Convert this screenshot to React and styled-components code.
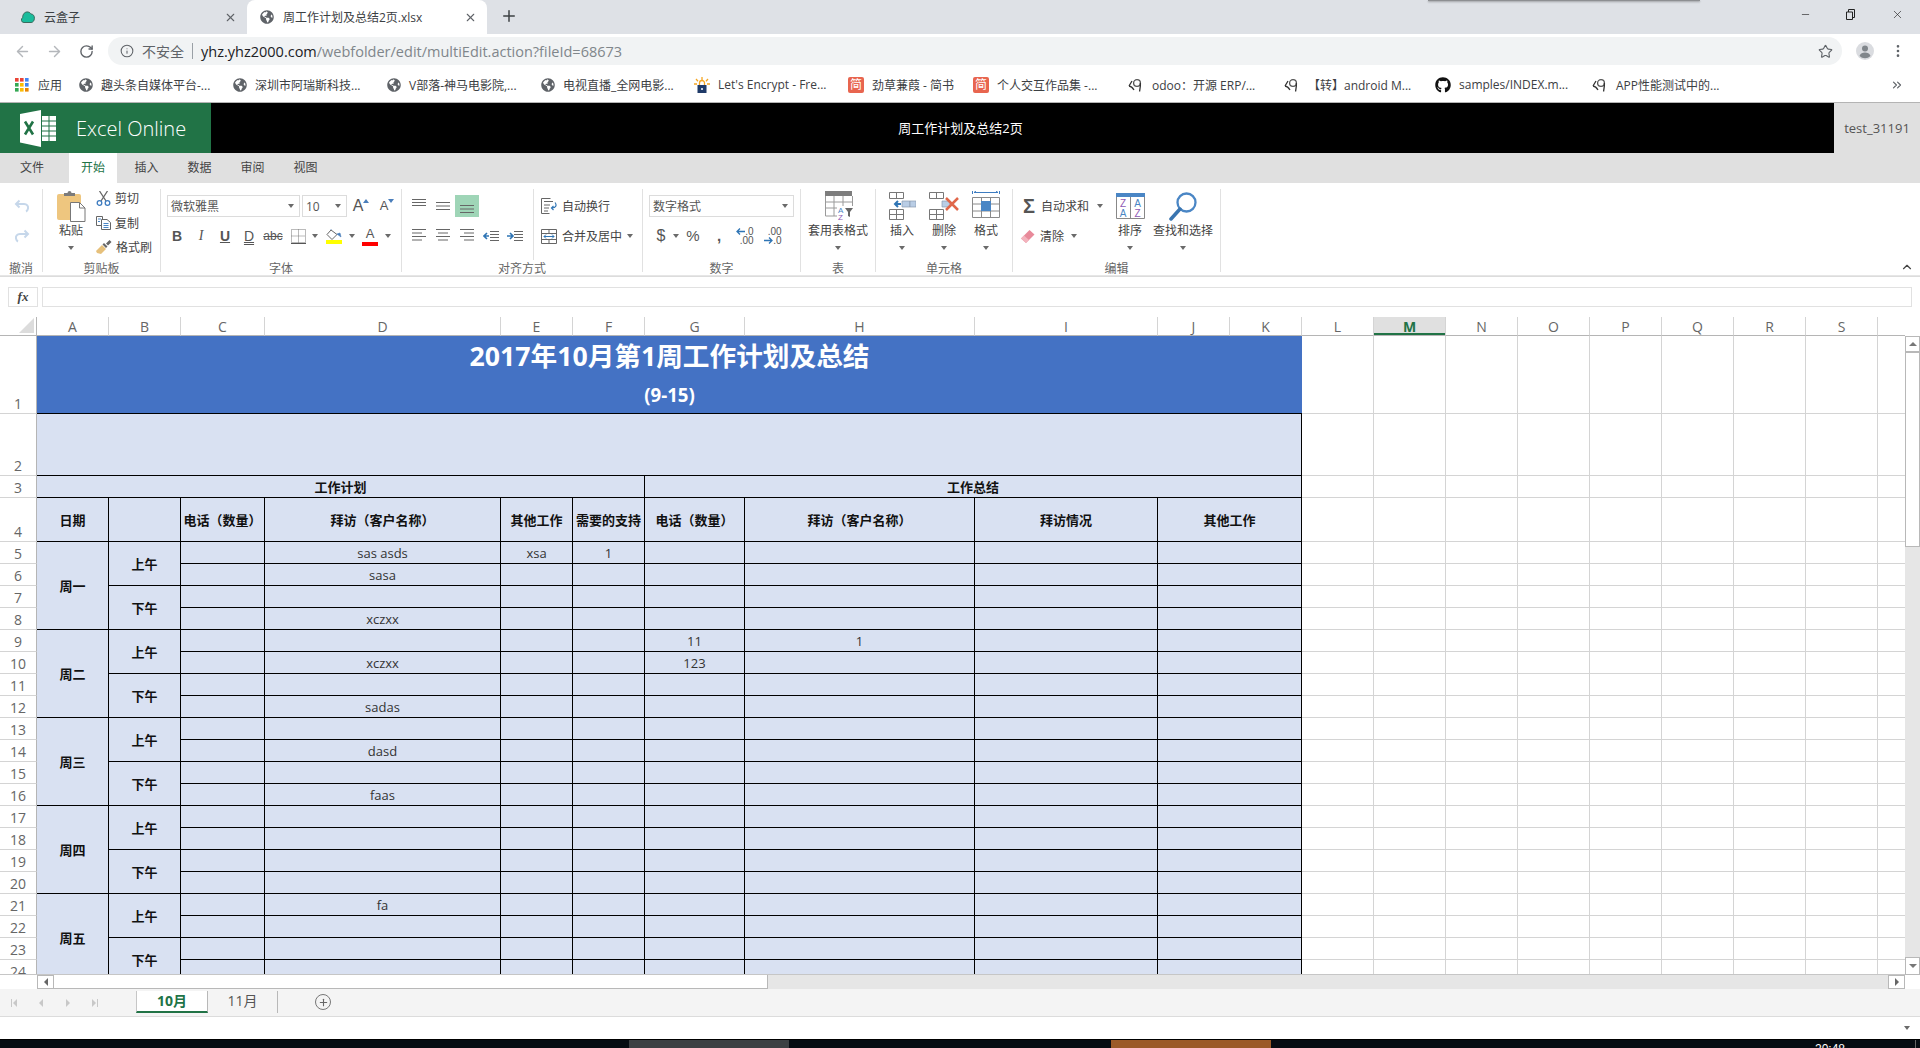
import React from 'react';
import styled, { createGlobalStyle } from 'styled-components';
import { ArrowLeft, ArrowRight, RotateCw, Info, Star, X, Plus, Minus, EllipsisVertical, ChevronsRight, ChevronUp } from 'lucide-react';
import { FaGithub, FaGlobeAmericas } from 'react-icons/fa';

const SANS = `"Open Sans", "Noto Sans CJK SC", sans-serif`;
const GREEN = '#217346';
const SHEET_BLUE = '#d9e1f2';
const GRID_LINE = '#d4d4d4';

const GlobalStyle = createGlobalStyle`
  html, body { margin: 0; padding: 0; background: #fff; }
  * { box-sizing: border-box; }
  body { font-family: ${SANS}; overflow: hidden; }
`;

const Page = styled.div`
  position: relative;
  width: 1920px;
  height: 1048px;
  display: flex;
  flex-direction: column;
  overflow: hidden;
`;

const Ico = styled.svg`
  display: block;
  flex: none;
`;

/* ---------- browser chrome ---------- */

const TabStrip = styled.div`
  height: 34px;
  display: flex;
  align-items: flex-end;
  background: #dee1e6;
  flex: none;
`;

const BrowserTab = styled.div`
  width: ${(p) => p.$w}px;
  height: 34px;
  padding: 0 10px 0 ${(p) => p.$pad}px;
  display: flex;
  align-items: center;
  gap: 9px;
  font-size: 12px;
  color: #3c4043;
  background: ${(p) => (p.$active ? '#fff' : 'transparent')};
  border-radius: 8px 8px 0 0;
`;

const TabClose = styled(X)`
  margin-left: auto;
  color: #5f6368;
`;

const NewTab = styled(Plus)`
  margin: 0 0 9px 13px;
  color: #3c4043;
`;

const WindowControls = styled.div`
  margin-left: auto;
  height: 28px;
  align-self: flex-start;
  display: flex;
`;

const WindowButton = styled.div`
  width: 46px;
  display: flex;
  align-items: center;
  justify-content: center;
  color: #222;
`;

const ShadowEdge = styled.div`
  position: absolute;
  left: 1428px;
  top: 0;
  width: 272px;
  height: 1px;
  background: #8d8f92;
  box-shadow: 0 1px 2px rgba(0, 0, 0, 0.4);
`;

const AddressRow = styled.div`
  height: 34px;
  display: flex;
  align-items: center;
  padding-left: 6px;
  background: #fff;
  flex: none;
`;

const NavButton = styled.div`
  width: 32px;
  display: flex;
  justify-content: center;
  color: ${(p) => (p.$off ? '#b4b7bb' : '#5f6368')};
`;

const Omnibox = styled.div`
  width: 1734px;
  margin-left: 6px;
  height: 28px;
  border-radius: 14px;
  background: #f1f3f4;
  display: flex;
  align-items: center;
  padding: 0 9px 0 12px;
  font-size: 14px;
  color: #80868b;
`;

const Insecure = styled.span`
  margin-left: 8px;
  color: #5f6368;
`;

const OmniDivider = styled.span`
  width: 1px;
  height: 16px;
  margin: 0 8px 0 8px;
  background: #9aa0a6;
`;

const UrlText = styled.span`
  font-size: 14.5px;
`;

const Domain = styled.span`
  color: #202124;
`;

const OmniStar = styled(Star)`
  margin-left: auto;
  color: #5f6368;
`;

const ProfileSlot = styled.div`
  width: 46px;
  display: flex;
  justify-content: center;
`;

const BookmarkRow = styled.div`
  height: 35px;
  display: flex;
  align-items: center;
  padding: 0 0 1px 15px;
  background: #fff;
  border-bottom: 1px solid #b4b4b4;
  font-size: 12px;
  color: #3c4043;
  flex: none;
`;

const Bookmark = styled.div`
  width: ${(p) => p.$w}px;
  display: flex;
  align-items: center;
  gap: ${(p) => p.$gap || 8}px;
  white-space: nowrap;
  flex: none;
`;

const JianBadge = styled.span`
  width: 16px;
  height: 16px;
  border-radius: 2px;
  background: #e8654f;
  color: #fff;
  font-size: 12px;
  line-height: 16px;
  text-align: center;
  flex: none;
`;

const MoreBookmarks = styled(ChevronsRight)`
  margin-left: auto;
  margin-right: 16px;
  color: #5f6368;
`;

const AppsIcon = () => {
  const colors = ['#ea4335', '#ea4335', '#4285f4', '#34a853', '#fbbc05', '#4285f4', '#34a853', '#fbbc05', '#ea8600'];
  return (
    <Ico width="14" height="14" viewBox="0 0 14 14">
      {colors.map((c, i) => (
        <rect key={i} x={(i % 3) * 5} y={Math.floor(i / 3) * 5} width="3.6" height="3.6" fill={c} />
      ))}
    </Ico>
  );
};

const CloudFavicon = () => (
  <Ico width="14" height="14" viewBox="0 0 14 14">
    <path d="M3 12.5a2.6 2.6 0 0 1-1.4-4.8C1.6 4 4 1.5 7 2c1.6.2 2.4 1.2 3 2 2 0 3.5 1.7 3.4 4.2 0 2.5-1.5 4.3-3.4 4.3z" fill="#1abc9c" stroke="#3a6b5e" strokeWidth="1" />
  </Ico>
);

const LetsEncryptIcon = () => (
  <Ico width="16" height="16" viewBox="0 0 16 16">
    <path d="M8 0v3M2 2l2 2.2M14 2l-2 2.2M0 7h3M16 7h-3" stroke="#f5a623" strokeWidth="1.3" />
    <path d="M5.5 8V6a2.5 2.5 0 0 1 5 0v2" fill="none" stroke="#f5a623" strokeWidth="1.3" />
    <rect x="3.5" y="8" width="9" height="8" fill="#1f3a68" />
    <circle cx="8" cy="12" r="1" fill="#fff" />
  </Ico>
);

const OdooIcon = () => (
  <Ico width="16" height="16" viewBox="0 0 16 16">
    <circle cx="9" cy="6" r="3.4" fill="none" stroke="#555" strokeWidth="1.3" />
    <path d="M12.4 6c.2 3.5-.6 6-.8 8.500M1 9c2 .2 3.500 1.500 5 4M1 9l3-5" fill="none" stroke="#333" strokeWidth="1.3" />
  </Ico>
);

const Globe = () => <FaGlobeAmericas size={14} color="#5f6368" style={{ flex: 'none' }} />;

const BOOKMARKS = [
  { w: 154, icon: 'globe', text: '趣头条自媒体平台-...' },
  { w: 154, icon: 'globe', text: '深圳市阿瑞斯科技...' },
  { w: 154, icon: 'globe', text: 'V部落-神马电影院,...' },
  { w: 153, icon: 'globe', text: '电视直播_全网电影...' },
  { w: 154, icon: 'le', text: "Let's Encrypt - Fre..." },
  { w: 125, icon: 'jian', text: '劲草蒹葭 - 简书' },
  { w: 155, icon: 'jian', text: '个人交互作品集 -...' },
  { w: 156, icon: 'odoo', text: 'odoo：开源 ERP/...' },
  { w: 151, icon: 'odoo', text: '【转】android M...' },
  { w: 157, icon: 'github', text: 'samples/INDEX.m...' },
  { w: 140, icon: 'odoo', text: 'APP性能测试中的...' }
];

const bookmarkIcon = (icon) => {
  if (icon === 'globe') return <Globe />;
  if (icon === 'le') return <LetsEncryptIcon />;
  if (icon === 'jian') return <JianBadge>简</JianBadge>;
  if (icon === 'github') return <FaGithub size={16} color="#111" style={{ flex: 'none' }} />;
  return <OdooIcon />;
};

/* ---------- excel header ---------- */

const AppBar = styled.div`
  height: 50px;
  display: flex;
  background: #000;
  flex: none;
`;

const Brand = styled.div`
  width: 211px;
  background: ${GREEN};
  display: flex;
  align-items: center;
  gap: 20px;
  padding-left: 20px;
  color: #fff;
  font-size: 20px;
  font-weight: 300;
`;

const DocTitle = styled.div`
  flex: 1;
  padding-right: 124px;
  text-align: center;
  line-height: 50px;
  color: #fff;
  font-size: 13px;
`;

const UserBox = styled.div`
  width: 86px;
  background: #e0e0e0;
  color: #555;
  font-size: 13px;
  line-height: 50px;
  text-align: center;
`;

const ExcelLogo = () => (
  <Ico width="36" height="37" viewBox="0 0 36 37">
    <path d="M0 4 21 0v37L0 32.5z" fill="#fff" />
    <path d="M5 11.5 13 24.5M13 11.5 5 24.5" stroke={GREEN} strokeWidth="2.6" />
    <path d="M22 6h14v25H22z" fill="#fff" />
    <path d="M29 6v25M22 11h14M22 16h14M22 21h14M22 26h14" stroke={GREEN} strokeWidth="1" />
  </Ico>
);

const RibbonTabs = styled.div`
  height: 30px;
  display: flex;
  background: #e0e0e0;
  flex: none;
`;

const RibbonTab = styled.div`
  width: ${(p) => p.$w || 53}px;
  margin-right: ${(p) => p.$mr || 0}px;
  text-align: center;
  line-height: 30px;
  font-size: 12px;
  color: ${(p) => (p.$active ? GREEN : '#444')};
  background: ${(p) => (p.$active ? '#fff' : 'transparent')};
`;

/* ---------- ribbon ---------- */

const Ribbon = styled.div`
  height: 94px;
  display: flex;
  align-items: flex-start;
  padding-top: 6px;
  background: #fff;
  border-bottom: 1px solid #dcdcdc;
  box-shadow: inset 0 -1px 0 #e6e6e6;
  color: #444;
  font-size: 12px;
  flex: none;
`;

const Group = styled.div`
  width: ${(p) => p.$w}px;
  height: 83px;
  display: flex;
  flex-direction: column;
  border-right: 1px solid #e1e1e1;
  flex: none;
`;

const GroupBody = styled.div`
  flex: 1;
  min-height: 0;
  display: flex;
  padding-left: ${(p) => p.$pad || 0}px;
`;

const GroupLabel = styled.div`
  height: 16px;
  padding-top: 1px;
  margin-bottom: -4px;
  line-height: 16px;
  text-align: center;
  color: #666;
`;

const Stack = styled.div`
  width: ${(p) => (p.$w ? `${p.$w}px` : 'auto')};
  padding-top: 6px;
  display: flex;
  flex-direction: column;
  gap: 8px;
  flex: none;
`;

const ToolRow = styled.div`
  height: 22px;
  display: flex;
  align-items: center;
  gap: ${(p) => p.$gap || 0}px;
`;

const ToolText = styled.span`
  white-space: nowrap;
`;

const ToolButton = styled.div`
  width: ${(p) => p.$w || 24}px;
  height: 22px;
  display: flex;
  align-items: center;
  justify-content: center;
  background: ${(p) => (p.$active ? '#9fd5b7' : 'transparent')};
  flex: none;
`;

const Caret = styled.span`
  display: block;
  width: 0;
  height: 0;
  margin: ${(p) => p.$margin || '0'};
  border-left: 3.5px solid transparent;
  border-right: 3.5px solid transparent;
  border-top: 4px solid #6a6a6a;
  flex: none;
`;

const LargeButton = styled.div`
  width: ${(p) => p.$w}px;
  display: flex;
  flex-direction: column;
  align-items: center;
  white-space: nowrap;
  flex: none;
`;

const LargeIcon = styled.div`
  height: 34px;
  display: flex;
  align-items: center;
  justify-content: center;
`;

const LargeText = styled.div`
  height: 16px;
  line-height: 16px;
`;

const LargeCaret = styled.div`
  height: 18px;
  display: flex;
  align-items: center;
`;

const ClipRows = styled.div`
  display: flex;
  flex-direction: column;
  margin: -3px 0 0 10px;
`;

const ClipRow = styled.div`
  height: 24.5px;
  display: flex;
  align-items: center;
  gap: 4px;
`;

const SelectBox = styled.div`
  width: ${(p) => p.$w}px;
  height: 22px;
  border: 1px solid #dcdcdc;
  margin-right: ${(p) => p.$mr || 0}px;
  padding: 0 5px 0 3px;
  display: flex;
  align-items: center;
  justify-content: space-between;
  color: #555;
  flex: none;
`;

const FormatGlyph = styled.span`
  font-family: ${(p) => (p.$serif ? '"Liberation Serif", serif' : '"Liberation Sans", sans-serif')};
  font-size: ${(p) => p.$size || 14}px;
  font-weight: ${(p) => (p.$bold ? 700 : 400)};
  font-style: ${(p) => (p.$italic ? 'italic' : 'normal')};
  text-decoration: ${(p) => p.$deco || 'none'};
  color: #555;
  line-height: 16px;
`;

const GrowGlyph = styled.div`
  display: flex;
  align-items: flex-start;
  color: #555;
  font-family: "Liberation Sans", sans-serif;
  font-size: ${(p) => p.$size}px;
  line-height: 18px;
`;

const TinyTriangle = styled.span`
  width: 0;
  height: 0;
  margin-top: 2px;
  border-left: 3px solid transparent;
  border-right: 3px solid transparent;
  ${(p) => (p.$down ? 'border-top: 4px solid #4a7ebb;' : 'border-bottom: 4px solid #4a7ebb;')}
`;

const ColorSwatch = styled.div`
  display: flex;
  flex-direction: column;
  align-items: center;
  width: 16px;
`;

const SwatchBar = styled.span`
  width: 16px;
  height: 4px;
  background: ${(p) => p.$color};
`;

const DecimalGlyph = styled.div`
  display: flex;
  flex-direction: column;
  align-items: flex-end;
  font-family: "Liberation Sans", sans-serif;
  font-size: 10px;
  line-height: 9px;
  color: #555;
`;

const DecimalLine = styled.div`
  display: flex;
  align-items: center;
`;

const SumGlyph = styled.span`
  width: 16px;
  font-family: "Liberation Sans", sans-serif;
  font-size: 20px;
  font-weight: 700;
  line-height: 20px;
  color: #555;
  text-align: center;
`;

const CollapseRibbon = styled(ChevronUp)`
  align-self: flex-end;
  margin: 0 6px 2px auto;
  color: #444;
`;

const AlignSplit = styled.div`
  width: 132px;
  height: 100%;
  padding-left: 5px;
  border-right: 1px solid #e1e1e1;
  margin-bottom: -16px;
`;

const UndoIcon = ({ flip }) => (
  <Ico width="16" height="14" viewBox="0 0 16 14" style={flip ? { transform: 'scaleX(-1)' } : undefined}>
    <path d="M5.5 1.5 2 5l3.5 3.5M2.5 5H10c3 0 4.5 2 4 4.5-.3 1.5-1 2.5-2 3" fill="none" stroke="#c6d7ea" strokeWidth="2" />
  </Ico>
);

const PasteIcon = () => (
  <Ico width="29" height="32" viewBox="0 0 29 32">
    <rect x="0" y="4" width="24" height="26" rx="2" fill="#eec67f" />
    <path d="M7 5V3h3.5a2 2 0 0 1 4 0H18v3H7z" fill="#7b7b7b" />
    <path d="M13.5 12.5h9l5.5 5.5v13.5H13.5z" fill="#fff" stroke="#777" />
    <path d="M22.5 12.5V18H28" fill="none" stroke="#777" />
  </Ico>
);

const CutIcon = () => (
  <Ico width="15" height="15" viewBox="0 0 15 15">
    <path d="M3.5 0 10 10M11.5 0 5 10" stroke="#666" strokeWidth="1.3" />
    <circle cx="3.5" cy="12" r="2.3" fill="none" stroke="#3e7cc0" strokeWidth="1.3" />
    <circle cx="11.5" cy="12" r="2.3" fill="none" stroke="#3e7cc0" strokeWidth="1.3" />
  </Ico>
);

const CopyIcon = () => (
  <Ico width="15" height="14" viewBox="0 0 15 14">
    <path d="M.5.5h6v9h-6z" fill="#fff" stroke="#666" />
    <path d="M5.5 3.5H11l3.5 3v7h-9z" fill="#fff" stroke="#666" />
    <path d="M2 3h3M2 5.5h2M7.5 7.5h5M7.5 9.5h5M7.5 11.5h5" stroke="#4a86c5" />
  </Ico>
);

const PainterIcon = () => (
  <Ico width="16" height="14" viewBox="0 0 16 14">
    <path d="M0 11 6 5l4 4-5 5-4-1z" fill="#e6c07b" />
    <path d="M6.5 4.5 8 3l3.5 3.5L10 8zM10 3.5 13.5 0 15.5 2 12 5.5z" fill="#666" />
  </Ico>
);

const BorderIcon = () => (
  <Ico width="15" height="15" viewBox="0 0 15 15">
    <path d="M.5.5h14v13h-14zM7.5.5v13M.5 7h14" fill="none" stroke="#777" strokeDasharray="1 1" />
    <path d="M0 14.5h15" stroke="#555" />
  </Ico>
);

const BucketIcon = () => (
  <Ico width="16" height="11" viewBox="0 0 16 11">
    <path d="M5 1 1 5.5 6 10.5l5-5z" fill="#fff" stroke="#666" />
    <path d="M5 1V0M11 5l3-1 1 4z" fill="#4a7ebb" stroke="#4a7ebb" strokeWidth=".6" />
  </Ico>
);

const AlignIcon = ({ kind }) => {
  const rows = {
    top: [[0, 14, 1.5], [0, 14, 4.5], [0, 14, 7.5]],
    middle: [[0, 14, 4.5], [0, 14, 8], [0, 14, 11.5]],
    bottom: [[0, 14, 7.5], [0, 14, 11], [0, 14, 14.5]],
    left: [[0, 14, 1.5], [0, 10, 5], [0, 14, 8.5], [0, 10, 12]],
    center: [[0, 14, 1.5], [2, 10, 5], [0, 14, 8.5], [2, 10, 12]],
    right: [[0, 14, 1.5], [4, 10, 5], [0, 14, 8.5], [4, 10, 12]]
  }[kind];

  return (
    <Ico width="14" height="16" viewBox="0 0 14 16">
      {rows.map(([x, w, y]) => (
        <path key={y} d={`M${x} ${y}h${w}`} stroke="#666" />
      ))}
    </Ico>
  );
};

const IndentIcon = ({ out }) => (
  <Ico width="16" height="12" viewBox="0 0 16 12">
    <path d="M7 1.5h9M7 4.5h9M7 7.5h9M7 10.5h9" stroke="#666" />
    <path d={out ? 'M6 6H1M4 3 1 6l3 3' : 'M0 6h5M3 3l3 3-3 3'} fill="none" stroke="#2f75b5" strokeWidth="1.6" />
  </Ico>
);

const WrapIcon = () => (
  <Ico width="16" height="16" viewBox="0 0 16 16">
    <path d="M.5.5h9M.5.5v15h8" fill="none" stroke="#666" />
    <path d="M3 3.5h9M3 7h6M3 10h5M3 13h4" stroke="#666" />
    <path d="M14 4.500c2 2.500 1 5.500-3 5.500M12.500 8 10.500 10l2 2" fill="none" stroke="#2f75b5" strokeWidth="1.2" />
  </Ico>
);

const MergeIcon = () => (
  <Ico width="16" height="15" viewBox="0 0 16 15">
    <path d="M.5.5h15v14H.5zM.5 4.5h15M.5 10.5h15M8 .5v4M8 10.5v4" fill="none" stroke="#666" />
    <path d="M3 7.5h10M5 5.5l-2 2 2 2M11 5.5l2 2-2 2" fill="none" stroke="#2f75b5" />
  </Ico>
);

const TableFormatIcon = () => (
  <Ico width="29" height="30" viewBox="0 0 29 30">
    <rect x="1" y="0" width="27" height="5" fill="#7d7d7d" />
    <path d="M1.5 5v20h27V5M1.5 11h27M1.5 17h27M10 5v20M19 5v20" fill="none" stroke="#9a9a9a" />
    <rect x="13" y="15" width="16" height="15" fill="#fff" />
    <text x="14" y="21.5" fontFamily="Liberation Sans, sans-serif" fontSize="8" fill="#4a86c5">A</text>
    <text x="14" y="29" fontFamily="Liberation Sans, sans-serif" fontSize="8" fill="#8e5ab5">Z</text>
    <path d="M21 17h8l-3 4v5l-2-1v-4z" fill="#666" />
  </Ico>
);

const CellsIcon = ({ kind }) => {
  const width = kind === 'insert' ? 27 : 30;

  return (
    <Ico width={width} height="28" viewBox={`0 0 ${width} 28`}>
      <path d="M.5.5h14v6H.5zM7.5.5v6M.5 17.5h14v10H.5zM7.5 17.5v10M.5 22.5h14" fill="none" stroke="#777" />
      {kind === 'insert' && <path d="M12 12H6M9 9l-3 3 3 3" fill="none" stroke="#2f75b5" strokeWidth="2" />}
      <path d="M13 9h8v6h-8z" fill="#b9cde5" stroke="#8a9bb0" strokeWidth=".7" />
      {kind === 'insert' && <path d="M21 9h6v6h-6z" fill="#b9cde5" stroke="#8a9bb0" strokeWidth=".7" />}
      {kind === 'delete' && <path d="M17 6l12 12M29 6 17 18" stroke="#e0674a" strokeWidth="2.5" />}
    </Ico>
  );
};

const FormatCellsIcon = () => (
  <Ico width="28" height="30" viewBox="0 0 28 30">
    <path d="M2 1.5h24M.5 0v3M27.5 0v3" stroke="#3e7cc0" />
    <path d="M6 1.5H2l2-1.5M22 1.5h4L24 0" fill="none" stroke="#3e7cc0" />
    <path d="M.5 6.5h27v20H.5zM9.5 6.5v20M18.5 6.5v20M.5 13h27M.5 20h27" fill="none" stroke="#8a8a8a" />
    <rect x="9" y="10" width="10" height="10" fill="#4a86c5" />
  </Ico>
);

const EraserIcon = () => (
  <Ico width="14" height="14" viewBox="0 0 14 14">
    <path d="M0 9.5 8.5 1l5 4.5L5 14z" fill="#e88a9a" />
    <path d="M0 9.5 3 6.5l5 4.5L5 14z" fill="#f3b3bd" />
  </Ico>
);

const SortIcon = () => (
  <Ico width="29" height="26" viewBox="0 0 29 26">
    <rect width="29" height="4" fill="#4a86c5" />
    <path d="M.5 4v21.5h28V4M14.5 4v21.5" fill="none" stroke="#888" />
    <g fontFamily="Liberation Sans, sans-serif" fontSize="10" textAnchor="middle">
      <text x="7" y="14" fill="#8e5ab5">Z</text>
      <text x="7" y="24" fill="#4a86c5">A</text>
      <text x="21.5" y="14" fill="#4a86c5">A</text>
      <text x="21.5" y="24" fill="#8e5ab5">Z</text>
    </g>
  </Ico>
);

const FindIcon = () => (
  <Ico width="28" height="29" viewBox="0 0 28 29">
    <circle cx="17.5" cy="10.5" r="9" fill="none" stroke="#4a86c5" strokeWidth="2.3" />
    <path d="M11 17 2 27" stroke="#3a75b0" strokeWidth="3.5" strokeLinecap="round" />
  </Ico>
);

/* ---------- formula bar ---------- */

const FormulaBar = styled.div`
  height: 40px;
  padding: 10px 8px;
  display: flex;
  gap: 4px;
  background: #fff;
  flex: none;
`;

const FxBox = styled.div`
  width: 30px;
  border: 1px solid #e1e1e1;
  font-family: "Liberation Serif", serif;
  font-size: 13px;
  font-style: italic;
  font-weight: 700;
  line-height: 17px;
  text-align: center;
  color: #444;
`;

const FormulaInput = styled.div`
  flex: 1;
  border: 1px solid #e1e1e1;
`;

/* ---------- sheet ---------- */

const GridArea = styled.div`
  height: 658px;
  display: flex;
  flex: none;
`;

const Viewport = styled.div`
  flex: 1;
  min-width: 0;
  overflow: hidden;
  border-bottom: 1px solid #c6c6c6;
`;

const SheetTable = styled.table`
  width: 1949px;
  table-layout: fixed;
  border-collapse: separate;
  border-spacing: 0;
  font-size: 13px;
  line-height: 16px;
  color: #333;
`;

const SheetCol = styled.col`
  width: ${(p) => p.$w}px;
`;

const SheetRow = styled.tr`
  height: ${(p) => p.$h}px;
`;

const ColHead = styled.th`
  padding: 0;
  font-size: 14px;
  line-height: 17px;
  font-weight: ${(p) => (p.$active ? 700 : 400)};
  color: ${(p) => (p.$active ? GREEN : '#666')};
  background: ${(p) => (p.$active ? '#e0e0e0' : '#fff')};
  border-right: 1px solid ${GRID_LINE};
  border-bottom: 1px solid #b5b5b5;
  box-shadow: ${(p) => (p.$active ? `inset 0 -2px 0 ${GREEN}` : 'none')};
`;

const CornerCell = styled.th`
  padding: 0;
  vertical-align: top;
  border-bottom: 1px solid #b5b5b5;
  border-right: 1px solid #b5b5b5;
`;

const CornerMark = styled.div`
  width: 0;
  height: 0;
  margin: 1px 2px 0 auto;
  border-left: 15px solid transparent;
  border-bottom: 15px solid #dcdcdc;
`;

const RowHead = styled.th`
  padding: 0;
  font-size: 14px;
  font-weight: 400;
  line-height: 18px;
  vertical-align: bottom;
  color: #666;
  background: #fff;
  border-right: 1px solid #b5b5b5;
  border-bottom: 1px solid ${GRID_LINE};
`;

const BlankCell = styled.td`
  padding: 0;
  border-right: 1px solid ${GRID_LINE};
  border-bottom: 1px solid ${GRID_LINE};
`;

const DataCell = styled.td`
  padding: 0;
  text-align: center;
  vertical-align: middle;
  overflow: hidden;
  white-space: nowrap;
  background: ${SHEET_BLUE};
  font-weight: ${(p) => (p.$bold ? 700 : 400)};
  color: ${(p) => (p.$bold ? '#111' : '#333')};
  border-right: 1px solid #000;
  border-bottom: 1px solid #000;
`;

const TitleCell = styled.td`
  padding: 0;
  text-align: center;
  background: #4472c4;
  color: #fff;
  font-weight: 700;
  border-bottom: 1px solid #000;
`;

const TitleLine = styled.div`
  font-size: 26.67px;
  line-height: 40px;
`;

const SubtitleLine = styled.div`
  font-size: 18.67px;
  line-height: 37px;
`;

const VScroll = styled.div`
  width: 15px;
  padding-top: 19px;
  display: flex;
  flex-direction: column;
  background: #e6e6e6;
  background-clip: content-box;
`;

const ScrollButton = styled.div`
  width: ${(p) => p.$w || 15}px;
  height: ${(p) => p.$h || 15}px;
  display: flex;
  align-items: center;
  justify-content: center;
  background: #fff;
  border: 1px solid #b8b8b8;
  flex: none;
`;

const Arrow = styled.span`
  width: 0;
  height: 0;
  ${(p) => p.$dir === 'up' && 'border-left: 4px solid transparent; border-right: 4px solid transparent; border-bottom: 4px solid #777;'}
  ${(p) => p.$dir === 'down' && 'border-left: 4px solid transparent; border-right: 4px solid transparent; border-top: 4px solid #777;'}
  ${(p) => p.$dir === 'left' && 'border-top: 4px solid transparent; border-bottom: 4px solid transparent; border-right: 4px solid #666;'}
  ${(p) => p.$dir === 'right' && 'border-top: 4px solid transparent; border-bottom: 4px solid transparent; border-left: 4px solid #666;'}
`;

const VThumb = styled.div`
  height: 195px;
  background: #fff;
  border: 1px solid #b8b8b8;
  flex: none;
`;

const VTrack = styled.div`
  flex: 1;
`;

const HScroll = styled.div`
  height: 14px;
  display: flex;
  padding-left: 37px;
  background: #fff;
  flex: none;
`;

const HThumb = styled.div`
  width: 714px;
  background: #fff;
  border-bottom: 1px solid #b8b8b8;
  border-right: 1px solid #b8b8b8;
  flex: none;
`;

const HTrack = styled.div`
  flex: 1;
  background: #e6e6e6;
`;

const HCorner = styled.div`
  width: 15px;
  flex: none;
`;

const SheetBar = styled.div`
  height: 28px;
  display: flex;
  align-items: flex-start;
  background: #f4f4f4;
  border-bottom: 1px solid #dcdcdc;
  flex: none;
`;

const SheetNav = styled.div`
  width: 27px;
  height: 27px;
  display: flex;
  align-items: center;
  justify-content: center;
  gap: 1px;
  flex: none;
`;

const NavBar = styled.span`
  width: 1px;
  height: 8px;
  background: #c8c8c8;
`;

const NavArrow = styled.span`
  width: 0;
  height: 0;
  border-top: 4px solid transparent;
  border-bottom: 4px solid transparent;
  ${(p) => (p.$left ? 'border-right: 4px solid #c8c8c8;' : 'border-left: 4px solid #c8c8c8;')}
`;

const SheetTab = styled.div`
  width: ${(p) => p.$w}px;
  height: 22px;
  margin: 2px 0 0 ${(p) => p.$ml || 0}px;
  text-align: center;
  font-size: 14px;
  line-height: 19px;
  font-weight: ${(p) => (p.$active ? 700 : 400)};
  color: ${(p) => (p.$active ? GREEN : '#555')};
  background: ${(p) => (p.$active ? '#fff' : 'transparent')};
  border-bottom: ${(p) => (p.$active ? `2px solid ${GREEN}` : 'none')};
  border-left: ${(p) => (p.$active ? '1px solid #c6c6c6' : 'none')};
  border-right: 1px solid #b8b8b8;
`;

const AddSheet = styled.div`
  width: 16px;
  height: 16px;
  margin: 5px 0 0 37px;
  border: 1px solid #777;
  border-radius: 50%;
  display: flex;
  align-items: center;
  justify-content: center;
  color: #666;
`;

const StatusBar = styled.div`
  height: 22px;
  display: flex;
  align-items: center;
  justify-content: flex-end;
  padding-right: 10px;
  background: #fff;
  flex: none;
`;

const Taskbar = styled.div`
  height: 9px;
  display: flex;
  background: #060c12;
  border-top: 1px solid #000;
  overflow: hidden;
  flex: none;
`;

const TaskItem = styled.div`
  width: 160px;
  margin-left: ${(p) => p.$ml}px;
  background: ${(p) => p.$color};
  flex: none;
`;

const TaskClock = styled.div`
  margin-left: 544px;
  padding-top: 2px;
  color: #fff;
  font-family: "Liberation Sans", sans-serif;
  font-size: 12px;
  line-height: 14px;
  white-space: nowrap;
`;

const TaskEdge = styled.div`
  width: 1px;
  margin-left: auto;
  margin-right: 4px;
  background: #666;
`;

/* ---------- data ---------- */

const SHEET_COLS = [
  ['A', 72], ['B', 72], ['C', 84], ['D', 236], ['E', 72], ['F', 72], ['G', 100], ['H', 230], ['I', 183], ['J', 72], ['K', 72],
  ['L', 72], ['M', 72], ['N', 72], ['O', 72], ['P', 72], ['Q', 72], ['R', 72], ['S', 72], ['T', 72]
];
const OFF_SHEET = ['L', 'M', 'N', 'O', 'P', 'Q', 'R', 'S', 'T'];
const DATA_COLS = ['C', 'D', 'E', 'F', 'G', 'H', 'I', 'J'];
const DAYS = ['周一', '周二', '周三', '周四', '周五'];

const HEADERS = ['日期', '', '电话（数量）', '拜访（客户名称）', '其他工作', '需要的支持', '电话（数量）', '拜访（客户名称）', '拜访情况', '其他工作'];

const VALUES = {
  5: { D: 'sas asds', E: 'xsa', F: '1' },
  6: { D: 'sasa' },
  8: { D: 'xczxx' },
  9: { G: '11', H: '1' },
  10: { D: 'xczxx', G: '123' },
  12: { D: 'sadas' },
  14: { D: 'dasd' },
  16: { D: 'faas' },
  21: { D: 'fa' }
};

const DATA_ROWS = Array.from({ length: 20 }, (_, i) => i + 5);

const BlankCells = () => OFF_SHEET.map((c) => <BlankCell key={c} />);

const ToolLarge = ({ w, icon, text }) => (
  <LargeButton $w={w}>
    <LargeIcon>{icon}</LargeIcon>
    <LargeText>{text}</LargeText>
    <LargeCaret>
      <Caret />
    </LargeCaret>
  </LargeButton>
);

const renderDataRow = (row) => {
  const k = row - 5;

  return (
    <SheetRow key={row} $h={22}>
      <RowHead>{row}</RowHead>
      {k % 4 === 0 && (
        <DataCell rowSpan={4} $bold>
          {DAYS[k / 4]}
        </DataCell>
      )}
      {k % 2 === 0 && (
        <DataCell rowSpan={2} $bold>
          {k % 4 === 0 ? '上午' : '下午'}
        </DataCell>
      )}
      {DATA_COLS.map((c) => (
        <DataCell key={c} colSpan={c === 'J' ? 2 : 1}>
          {(VALUES[row] || {})[c]}
        </DataCell>
      ))}
      <BlankCells />
    </SheetRow>
  );
};

const App = () => (
  <Page>
    <GlobalStyle />

    <TabStrip>
      <BrowserTab $w={247} $pad={21}>
        <CloudFavicon />
        云盒子
        <TabClose size={13} strokeWidth={2} />
      </BrowserTab>
      <BrowserTab $w={240} $pad={13} $active>
        <Globe />
        周工作计划及总结2页.xlsx
        <TabClose size={13} strokeWidth={2} />
      </BrowserTab>
      <NewTab size={18} strokeWidth={2} />
      <WindowControls>
        <WindowButton>
          <Minus size={11} strokeWidth={1.4} />
        </WindowButton>
        <WindowButton>
          <Ico width="10" height="11" viewBox="0 0 10 11">
            <path d="M2.5 3V.5h6v8H7M.5 3h6v7.5h-6z" fill="none" stroke="#222" />
          </Ico>
        </WindowButton>
        <WindowButton>
          <X size={13} strokeWidth={1.2} />
        </WindowButton>
      </WindowControls>
    </TabStrip>
    <ShadowEdge />

    <AddressRow>
      <NavButton $off>
        <ArrowLeft size={17} strokeWidth={2} />
      </NavButton>
      <NavButton $off>
        <ArrowRight size={17} strokeWidth={2} />
      </NavButton>
      <NavButton>
        <RotateCw size={15} strokeWidth={2.2} />
      </NavButton>
      <Omnibox>
        <Info size={14} strokeWidth={1.8} color="#5f6368" />
        <Insecure>不安全</Insecure>
        <OmniDivider />
        <UrlText>
          <Domain>yhz.yhz2000.com</Domain>/webfolder/edit/multiEdit.action?fileId=68673
        </UrlText>
        <OmniStar size={15} strokeWidth={1.8} />
      </Omnibox>
      <ProfileSlot>
        <Ico width="18" height="18" viewBox="0 0 18 18">
          <circle cx="9" cy="9" r="9" fill="#dadce0" />
          <circle cx="9" cy="6.5" r="3" fill="#80868b" />
          <path d="M3.5 14c1-3 3-3.5 5.5-3.5s4.5.5 5.5 3.5a8 8 0 0 1-11 0z" fill="#80868b" />
        </Ico>
      </ProfileSlot>
      <EllipsisVertical size={16} color="#5f6368" style={{ marginLeft: 2 }} />
    </AddressRow>

    <BookmarkRow>
      <Bookmark $w={64} $gap={9}>
        <AppsIcon />
        应用
      </Bookmark>
      {BOOKMARKS.map((b) => (
        <Bookmark key={b.text} $w={b.w}>
          {bookmarkIcon(b.icon)}
          {b.text}
        </Bookmark>
      ))}
      <MoreBookmarks size={14} />
    </BookmarkRow>

    <AppBar>
      <Brand>
        <ExcelLogo />
        Excel Online
      </Brand>
      <DocTitle>周工作计划及总结2页</DocTitle>
      <UserBox>test_31191</UserBox>
    </AppBar>

    <RibbonTabs>
      <RibbonTab $w={64} $mr={5}>文件</RibbonTab>
      <RibbonTab $w={48} $mr={3} $active>开始</RibbonTab>
      <RibbonTab>插入</RibbonTab>
      <RibbonTab>数据</RibbonTab>
      <RibbonTab>审阅</RibbonTab>
      <RibbonTab>视图</RibbonTab>
    </RibbonTabs>

    <Ribbon>
      <Group $w={43}>
        <GroupBody $pad={14}>
          <Stack>
            <ToolRow>
              <UndoIcon />
            </ToolRow>
            <ToolRow>
              <UndoIcon flip />
            </ToolRow>
          </Stack>
        </GroupBody>
        <GroupLabel>撤消</GroupLabel>
      </Group>

      <Group $w={118}>
        <GroupBody $pad={13}>
          <ToolLarge w={30} icon={<PasteIcon />} text="粘贴" />
          <ClipRows>
            <ClipRow>
              <CutIcon />
              <ToolText>剪切</ToolText>
            </ClipRow>
            <ClipRow>
              <CopyIcon />
              <ToolText>复制</ToolText>
            </ClipRow>
            <ClipRow>
              <PainterIcon />
              <ToolText>格式刷</ToolText>
            </ClipRow>
          </ClipRows>
        </GroupBody>
        <GroupLabel>剪贴板</GroupLabel>
      </Group>

      <Group $w={241}>
        <GroupBody $pad={4}>
          <Stack>
            <ToolRow>
              <ToolButton $w={2} />
              <SelectBox $w={133} $mr={2}>
                微软雅黑
                <Caret />
              </SelectBox>
              <SelectBox $w={45}>
                10
                <Caret />
              </SelectBox>
              <ToolButton $w={28}>
                <GrowGlyph $size={16}>
                  A
                  <TinyTriangle />
                </GrowGlyph>
              </ToolButton>
              <ToolButton $w={24}>
                <GrowGlyph $size={13}>
                  A
                  <TinyTriangle $down />
                </GrowGlyph>
              </ToolButton>
            </ToolRow>
            <ToolRow>
              <ToolButton>
                <FormatGlyph $bold>B</FormatGlyph>
              </ToolButton>
              <ToolButton>
                <FormatGlyph $italic $serif>I</FormatGlyph>
              </ToolButton>
              <ToolButton>
                <FormatGlyph $bold $deco="underline">U</FormatGlyph>
              </ToolButton>
              <ToolButton>
                <FormatGlyph $deco="underline double">D</FormatGlyph>
              </ToolButton>
              <ToolButton>
                <FormatGlyph $size={12} $deco="line-through">abc</FormatGlyph>
              </ToolButton>
              <ToolButton $w={26}>
                <BorderIcon />
              </ToolButton>
              <ToolButton $w={8}>
                <Caret />
              </ToolButton>
              <ToolButton $w={30}>
                <ColorSwatch>
                  <BucketIcon />
                  <SwatchBar $color="#ffff00" />
                </ColorSwatch>
              </ToolButton>
              <ToolButton $w={6}>
                <Caret />
              </ToolButton>
              <ToolButton $w={30}>
                <ColorSwatch>
                  <FormatGlyph $size={13}>A</FormatGlyph>
                  <SwatchBar $color="#ff0000" />
                </ColorSwatch>
              </ToolButton>
              <ToolButton $w={6}>
                <Caret />
              </ToolButton>
            </ToolRow>
          </Stack>
        </GroupBody>
        <GroupLabel>字体</GroupLabel>
      </Group>

      <Group $w={241}>
        <GroupBody>
          <AlignSplit>
            <Stack>
              <ToolRow>
                <ToolButton>
                  <AlignIcon kind="top" />
                </ToolButton>
                <ToolButton>
                  <AlignIcon kind="middle" />
                </ToolButton>
                <ToolButton $active>
                  <AlignIcon kind="bottom" />
                </ToolButton>
              </ToolRow>
              <ToolRow>
                <ToolButton>
                  <AlignIcon kind="left" />
                </ToolButton>
                <ToolButton>
                  <AlignIcon kind="center" />
                </ToolButton>
                <ToolButton>
                  <AlignIcon kind="right" />
                </ToolButton>
                <ToolButton>
                  <IndentIcon out />
                </ToolButton>
                <ToolButton>
                  <IndentIcon />
                </ToolButton>
              </ToolRow>
            </Stack>
          </AlignSplit>
          <Stack>
            <ToolRow $gap={5}>
              <ToolButton $w={2} />
              <WrapIcon />
              <ToolText>自动换行</ToolText>
            </ToolRow>
            <ToolRow $gap={5}>
              <ToolButton $w={2} />
              <MergeIcon />
              <ToolText>合并及居中</ToolText>
              <Caret />
            </ToolRow>
          </Stack>
        </GroupBody>
        <GroupLabel>对齐方式</GroupLabel>
      </Group>

      <Group $w={158}>
        <GroupBody $pad={6}>
          <Stack>
            <ToolRow>
              <SelectBox $w={145}>
                数字格式
                <Caret />
              </SelectBox>
            </ToolRow>
            <ToolRow>
              <ToolButton>
                <FormatGlyph $size={16}>$</FormatGlyph>
              </ToolButton>
              <ToolButton $w={6}>
                <Caret />
              </ToolButton>
              <ToolButton $w={28}>
                <FormatGlyph $size={15}>%</FormatGlyph>
              </ToolButton>
              <ToolButton>
                <FormatGlyph $bold $size={15}>,</FormatGlyph>
              </ToolButton>
              <ToolButton $w={28}>
                <DecimalGlyph>
                  <DecimalLine>
                    <Ico width="9" height="7" viewBox="0 0 9 7">
                      <path d="M9 3.5H1M4 .5l-3 3 3 3" fill="none" stroke="#2f75b5" strokeWidth="1.3" />
                    </Ico>
                    .0
                  </DecimalLine>
                  <DecimalLine>.00</DecimalLine>
                </DecimalGlyph>
              </ToolButton>
              <ToolButton $w={28}>
                <DecimalGlyph>
                  <DecimalLine>.00</DecimalLine>
                  <DecimalLine>
                    <Ico width="9" height="7" viewBox="0 0 9 7">
                      <path d="M0 3.5h8M5 .5l3 3-3 3" fill="none" stroke="#2f75b5" strokeWidth="1.3" />
                    </Ico>
                    .0
                  </DecimalLine>
                </DecimalGlyph>
              </ToolButton>
            </ToolRow>
          </Stack>
        </GroupBody>
        <GroupLabel>数字</GroupLabel>
      </Group>

      <Group $w={75}>
        <GroupBody>
          <ToolLarge w={74} icon={<TableFormatIcon />} text="套用表格式" />
        </GroupBody>
        <GroupLabel>表</GroupLabel>
      </Group>

      <Group $w={137}>
        <GroupBody $pad={5}>
          <ToolLarge w={42} icon={<CellsIcon kind="insert" />} text="插入" />
          <ToolLarge w={42} icon={<CellsIcon kind="delete" />} text="删除" />
          <ToolLarge w={42} icon={<FormatCellsIcon />} text="格式" />
        </GroupBody>
        <GroupLabel>单元格</GroupLabel>
      </Group>

      <Group $w={208}>
        <GroupBody $pad={8}>
          <Stack $w={84}>
            <ToolRow $gap={4}>
              <SumGlyph>Σ</SumGlyph>
              <ToolText>自动求和</ToolText>
              <Caret $margin="0 0 0 4px" />
            </ToolRow>
            <ToolRow $gap={5}>
              <EraserIcon />
              <ToolText>清除</ToolText>
              <Caret $margin="0 0 0 2px" />
            </ToolRow>
          </Stack>
          <ToolLarge w={50} icon={<SortIcon />} text="排序" />
          <ToolLarge w={56} icon={<FindIcon />} text="查找和选择" />
        </GroupBody>
        <GroupLabel>编辑</GroupLabel>
      </Group>

      <CollapseRibbon size={14} strokeWidth={2} />
    </Ribbon>

    <FormulaBar>
      <FxBox>fx</FxBox>
      <FormulaInput />
    </FormulaBar>

    <GridArea>
      <Viewport>
        <SheetTable>
          <colgroup>
            <SheetCol $w={37} />
            {SHEET_COLS.map(([name, w]) => (
              <SheetCol key={name} $w={w} />
            ))}
          </colgroup>
          <thead>
            <SheetRow $h={19}>
              <CornerCell>
                <CornerMark />
              </CornerCell>
              {SHEET_COLS.map(([name]) => (
                <ColHead key={name} $active={name === 'M'}>
                  {name === 'T' ? '' : name}
                </ColHead>
              ))}
            </SheetRow>
          </thead>
          <tbody>
            <SheetRow $h={78}>
              <RowHead>1</RowHead>
              <TitleCell colSpan={11}>
                <TitleLine>2017年10月第1周工作计划及总结</TitleLine>
                <SubtitleLine>(9-15)</SubtitleLine>
              </TitleCell>
              <BlankCells />
            </SheetRow>
            <SheetRow $h={62}>
              <RowHead>2</RowHead>
              <DataCell colSpan={11} />
              <BlankCells />
            </SheetRow>
            <SheetRow $h={22}>
              <RowHead>3</RowHead>
              <DataCell colSpan={6} $bold>
                工作计划
              </DataCell>
              <DataCell colSpan={5} $bold>
                工作总结
              </DataCell>
              <BlankCells />
            </SheetRow>
            <SheetRow $h={44}>
              <RowHead>4</RowHead>
              {HEADERS.map((label, i) => (
                <DataCell key={i} colSpan={i === 9 ? 2 : 1} $bold>
                  {label}
                </DataCell>
              ))}
              <BlankCells />
            </SheetRow>
            {DATA_ROWS.map(renderDataRow)}
          </tbody>
        </SheetTable>
      </Viewport>
      <VScroll>
        <ScrollButton $h={16}>
          <Arrow $dir="up" />
        </ScrollButton>
        <VThumb />
        <VTrack />
        <ScrollButton $h={18}>
          <Arrow $dir="down" />
        </ScrollButton>
      </VScroll>
    </GridArea>

    <HScroll>
      <ScrollButton $w={17} $h={14}>
        <Arrow $dir="left" />
      </ScrollButton>
      <HThumb />
      <HTrack />
      <ScrollButton $w={17} $h={14}>
        <Arrow $dir="right" />
      </ScrollButton>
      <HCorner />
    </HScroll>

    <SheetBar>
      <SheetNav>
        <NavBar />
        <NavArrow $left />
      </SheetNav>
      <SheetNav>
        <NavArrow $left />
      </SheetNav>
      <SheetNav>
        <NavArrow />
      </SheetNav>
      <SheetNav>
        <NavArrow />
        <NavBar />
      </SheetNav>
      <SheetTab $w={72} $ml={28} $active>
        10月
      </SheetTab>
      <SheetTab $w={70}>11月</SheetTab>
      <AddSheet>
        <Plus size={11} strokeWidth={2.4} />
      </AddSheet>
    </SheetBar>

    <StatusBar>
      <Caret />
    </StatusBar>

    <Taskbar>
      <TaskItem $ml={629} $color="#3c4043" />
      <TaskItem $ml={322} $color="#9b5a28" />
      <TaskClock>20:48</TaskClock>
      <TaskEdge />
    </Taskbar>
  </Page>
);

export default App;
